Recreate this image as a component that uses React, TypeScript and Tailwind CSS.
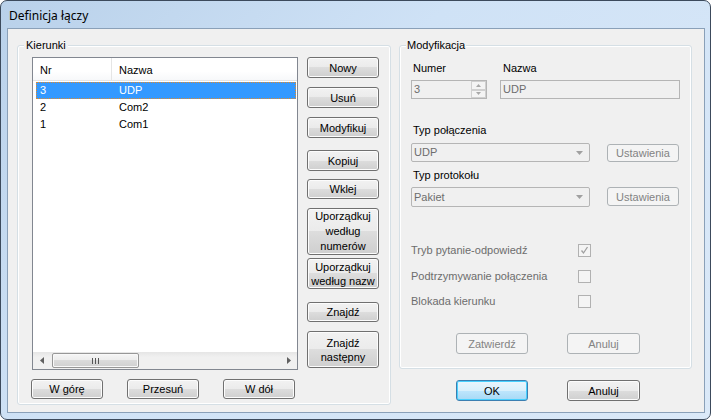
import React from "react";

const btn =
  "flex items-center justify-center text-center border border-[#707070] rounded-[3px] bg-[linear-gradient(to_bottom,#f2f2f2_0%,#ebebeb_50%,#dddddd_50%,#cfcfcf_100%)] shadow-[inset_0_0_0_1px_#fcfcfc] text-black leading-[14px]";
const btnDis =
  "flex items-center justify-center text-center border border-[#adb2b5] rounded-[3px] bg-[#f4f4f4] text-[#838383] leading-[14px]";
const btnDef =
  "flex items-center justify-center text-center border border-[#3c7fb1] rounded-[3px] bg-[linear-gradient(to_bottom,#eaf6fd_0%,#d9f0fc_50%,#bee6fd_50%,#a7d9f5_100%)] shadow-[inset_0_0_0_1px_#48d0fe] text-black leading-[14px]";

function Check({ checked }: { checked?: boolean }) {
  return (
    <div className="w-[13px] h-[13px] border border-[#b1b1b1] bg-[#f4f4f4] flex items-center justify-center">
      {checked && (
        <svg width="9" height="9" viewBox="0 0 9 9">
          <path d="M1.5 4.5 L3.5 7 L7.5 1" fill="none" stroke="#a0a0a0" strokeWidth="1.3" />
        </svg>
      )}
    </div>
  );
}

function DownArrow({ color = "#a0a0a0" }: { color?: string }) {
  return (
    <svg width="7" height="4" viewBox="0 0 7 4">
      <path d="M0 0 L7 0 L3.5 4 Z" fill={color} />
    </svg>
  );
}

export default function App() {
  return (
    <div className="w-[711px] h-[420px] bg-white overflow-hidden font-['Liberation_Sans',Arial,sans-serif] text-[11px] text-black">
      <div className="w-full h-full rounded-[7px] border border-[#3c4a5c] bg-[linear-gradient(135deg,#b9d1ea_0%,#cfe2f6_40%,#dbe9f8_100%)] flex flex-col">
        {/* Title bar */}
        <div className="h-[27px] shrink-0 flex items-center pl-[8px] pt-[2px] text-[12px] font-['Noto_Sans',Arial,sans-serif] text-black">
          Definicja łączy
        </div>
        {/* Client area */}
        <div className="flex-1 ml-[6px] mr-[5px] mb-[6px] border border-[#8aa0b8] bg-[#f0f0f0] flex">
          {/* Left group */}
          <div className="relative ml-[9px] mt-[16px] w-[374px] h-[360px] border border-[#d5dfe5] rounded-[3px] shadow-[inset_0_0_0_1px_#ffffff] flex flex-col">
            <div className="absolute -top-[7px] left-[6px] px-[2px] bg-[#f0f0f0] leading-[13px]">Kierunki</div>
            <div className="flex pl-[14px] pt-[11px]">
              {/* List view */}
              <div className="w-[266px] h-[313px] border border-[#828790] bg-white flex flex-col">
                <div className="h-[23px] flex border-b border-[#e5e5e5] bg-[linear-gradient(to_bottom,#ffffff_0%,#ffffff_60%,#f7f8fa_100%)]">
                  <div className="w-[79px] pl-[7px] pt-[4px] border-r border-[#e5e5e5] leading-[16px]">Nr</div>
                  <div className="flex-1 pl-[7px] pt-[4px] leading-[16px]">Nazwa</div>
                </div>
                <div className="mt-[1px] ml-[3px] mr-[1px] flex flex-col">
                  <div className="h-[17px] flex items-center bg-[#3399ff] text-white border border-dotted border-[#e08a2c]">
                    <div className="w-[79px] pl-[3px]">3</div>
                    <div className="pl-[3px]">UDP</div>
                  </div>
                  <div className="h-[17px] flex items-center">
                    <div className="w-[79px] pl-[4px]">2</div>
                    <div className="pl-[4px]">Com2</div>
                  </div>
                  <div className="h-[17px] flex items-center">
                    <div className="w-[79px] pl-[4px]">1</div>
                    <div className="pl-[4px]">Com1</div>
                  </div>
                </div>
                <div className="flex-1" />
                {/* Scrollbar */}
                <div className="h-[17px] flex items-center bg-[linear-gradient(to_bottom,#e5e5e5_0%,#f0f0f0_30%,#f0f0f0_100%)]">
                  <div className="w-[17px] h-full flex items-center justify-center">
                    <svg width="4" height="7" viewBox="0 0 4 7">
                      <path d="M4 0 L4 7 L0 3.5 Z" fill="#606060" />
                    </svg>
                  </div>
                  <div className="ml-[2px] w-[87px] h-[15px] border border-[#979797] rounded-[2px] bg-[linear-gradient(to_bottom,#f5f5f5_0%,#ececec_50%,#dbdbdb_50%,#d0d0d0_100%)] shadow-[inset_0_0_0_1px_#f8f8f8] flex items-center justify-center">
                    <svg width="7" height="6" viewBox="0 0 7 6">
                      <path d="M0.5 0 V6 M3.5 0 V6 M6.5 0 V6" stroke="#555" strokeWidth="1" />
                    </svg>
                  </div>
                  <div className="flex-1" />
                  <div className="w-[17px] h-full flex items-center justify-center">
                    <svg width="4" height="7" viewBox="0 0 4 7">
                      <path d="M0 0 L0 7 L4 3.5 Z" fill="#606060" />
                    </svg>
                  </div>
                </div>
              </div>
              {/* Buttons column */}
              <div className="ml-[9px] w-[72px] flex flex-col">
                <div className={btn + " h-[21px]"}>Nowy</div>
                <div className={btn + " h-[21px] mt-[9px]"}>Usuń</div>
                <div className={btn + " h-[21px] mt-[9px]"}>Modyfikuj</div>
                <div className={btn + " h-[21px] mt-[12px]"}>Kopiuj</div>
                <div className={btn + " h-[20px] mt-[8px]"}>Wklej</div>
                <div className={btn + " h-[47px] mt-[9px] leading-[15px]"}>
                  Uporządkuj
                  <br />
                  według
                  <br />
                  numerów
                </div>
                <div className={btn + " h-[31px] mt-[3px]"}>
                  Uporządkuj
                  <br />
                  według nazw
                </div>
                <div className={btn + " h-[20px] mt-[13px]"}>Znajdź</div>
                <div className={btn + " h-[37px] mt-[9px] leading-[13px]"}>
                  Znajdź
                  <br />
                  następny
                </div>
              </div>
            </div>
            <div className="flex pl-[13px] mt-[9px]">
              <div className={btn + " w-[72px] h-[20px]"}>W górę</div>
              <div className={btn + " w-[72px] h-[20px] ml-[24px]"}>Przesuń</div>
              <div className={btn + " w-[72px] h-[20px] ml-[24px]"}>W dół</div>
            </div>
          </div>

          {/* Right column */}
          <div className="ml-[8px] flex flex-col">
            <div className="relative mt-[16px] w-[293px] h-[324px] border border-[#d5dfe5] rounded-[3px] shadow-[inset_0_0_0_1px_#ffffff] flex flex-col">
              <div className="absolute -top-[7px] left-[6px] px-[1px] bg-[#f0f0f0] leading-[13px]">Modyfikacja</div>
              <div className="mt-[16px] h-[13px] leading-[13px] flex">
                <div className="pl-[13px] w-[103px]">Numer</div>
                <div>Nazwa</div>
              </div>
              <div className="mt-[5px] flex pl-[11px]">
                <div className="w-[76px] h-[19px] border border-[#b5b5b5] bg-[#f0f0f0] flex items-center">
                  <div className="flex-1 pl-[2px] text-[#6d6d6d]">3</div>
                  <div className="w-[15px] h-full flex flex-col">
                    <div className="flex-1 border border-[#d0d0d0] bg-[#f4f4f4] flex items-center justify-center">
                      <svg width="5" height="3" viewBox="0 0 5 3">
                        <path d="M0 3 L5 3 L2.5 0 Z" fill="#a8a8a8" />
                      </svg>
                    </div>
                    <div className="flex-1 border border-[#d0d0d0] bg-[#f4f4f4] flex items-center justify-center">
                      <svg width="5" height="3" viewBox="0 0 5 3">
                        <path d="M0 0 L5 0 L2.5 3 Z" fill="#a8a8a8" />
                      </svg>
                    </div>
                  </div>
                </div>
                <div className="ml-[13px] w-[180px] h-[19px] border border-[#b5b5b5] bg-[#f0f0f0] flex items-center pl-[2px] text-[#6d6d6d]">
                  UDP
                </div>
              </div>
              <div className="mt-[25px] pl-[13px] h-[13px] leading-[13px]">Typ połączenia</div>
              <div className="mt-[6px] flex items-start pl-[11px]">
                <div className="w-[179px] h-[19px] border border-[#b5b5b5] rounded-[2px] bg-[#f0f0f0] flex items-center pl-[2px] text-[#6d6d6d]">
                  <div className="flex-1">UDP</div>
                  <div className="w-[17px] flex items-center justify-center pr-[2px]">
                    <DownArrow />
                  </div>
                </div>
                <div className={btnDis + " ml-[17px] mt-[1px] w-[72px] h-[18px]"}>Ustawienia</div>
              </div>
              <div className="mt-[7px] pl-[13px] h-[13px] leading-[13px]">Typ protokołu</div>
              <div className="mt-[5px] flex items-start pl-[11px]">
                <div className="w-[179px] h-[20px] border border-[#b5b5b5] rounded-[2px] bg-[#f0f0f0] flex items-center pl-[2px] text-[#6d6d6d]">
                  <div className="flex-1">Pakiet</div>
                  <div className="w-[17px] flex items-center justify-center pr-[2px]">
                    <DownArrow />
                  </div>
                </div>
                <div className={btnDis + " ml-[17px] w-[72px] h-[19px]"}>Ustawienia</div>
              </div>
              <div className="mt-[37px] flex items-center pl-[11px] h-[13px] text-[#6d6d6d]">
                <div className="w-[167px]">Tryb pytanie-odpowiedź</div>
                <Check checked />
              </div>
              <div className="mt-[13px] flex items-center pl-[11px] h-[13px] text-[#6d6d6d]">
                <div className="w-[167px]">Podtrzymywanie połączenia</div>
                <Check />
              </div>
              <div className="mt-[12px] flex items-center pl-[11px] h-[13px] text-[#6d6d6d]">
                <div className="w-[167px]">Blokada kierunku</div>
                <Check />
              </div>
              <div className="mt-[25px] flex pl-[56px]">
                <div className={btnDis + " w-[72px] h-[21px]"}>Zatwierdź</div>
                <div className={btnDis + " ml-[39px] w-[73px] h-[21px]"}>Anuluj</div>
              </div>
            </div>
            <div className="mt-[11px] flex pl-[57px]">
              <div className={btnDef + " w-[72px] h-[21px]"}>OK</div>
              <div className={btn + " ml-[39px] w-[73px] h-[21px]"}>Anuluj</div>
            </div>
          </div>
        </div>
      </div>
    </div>
  );
}
